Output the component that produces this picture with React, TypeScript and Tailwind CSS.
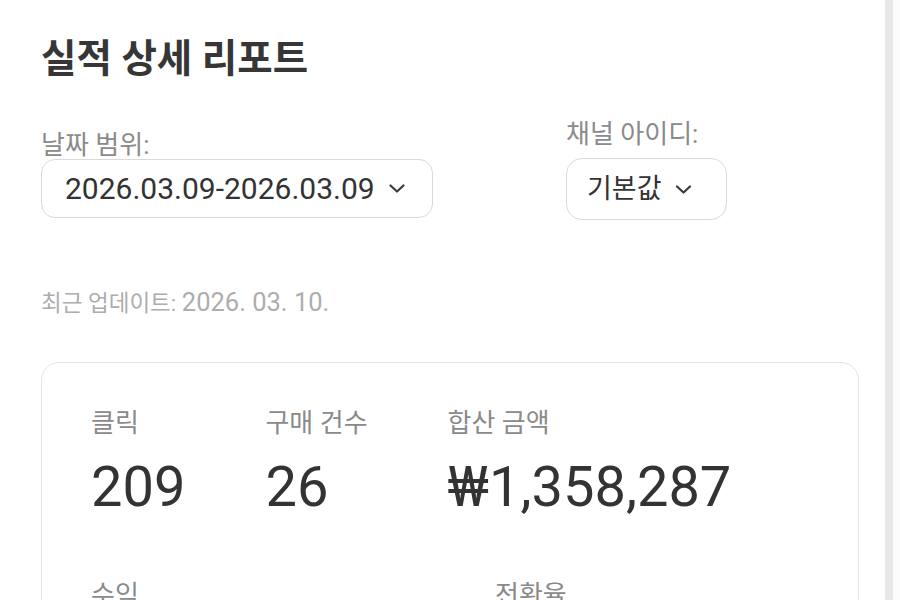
const font = "font-['Roboto','Noto_Sans_CJK_KR',sans-serif]"

function Chevron({ className }: { className?: string }) {
  return (
    <svg viewBox="0 0 16 9" className={className} fill="none" stroke="currentColor" strokeWidth={2.2} strokeLinecap="round" strokeLinejoin="round">
      <polyline points="1.5 1.5 8 7.5 14.5 1.5" />
    </svg>
  )
}

const stats = [
  { label: '클릭', value: '209' },
  { label: '구매 건수', value: '26' },
  { label: '합산 금액', value: '₩1,358,287' },
]

export default function App() {
  return (
    <div className={`flex h-screen w-full overflow-hidden bg-white text-[#333] ${font}`}>
      <main className="w-[885px] shrink-0 pl-[41px]">
        {/* Title */}
        <h1 className="pt-[37px] text-[38.5px] font-bold leading-[44px] text-[#363636]">
          실적 상세 리포트
        </h1>

        {/* Filters */}
        <div className="flex items-start gap-[133px]">
          <div className="mt-[50px] flex flex-col">
            <span className="text-[26px] leading-[28px] text-[#8a8a8a]">날짜 범위:</span>
            <button className="flex h-[59px] w-[392px] items-center gap-[14px] rounded-[14px] border-[1.5px] border-[#dadada] pl-[23px] text-[30px] text-[#333]">
              <span>2026.03.09-2026.03.09</span>
              <Chevron className="h-[9px] w-[16px] text-[#3a3a3a]" />
            </button>
          </div>
          <div className="mt-[39px] flex flex-col">
            <span className="text-[26px] leading-[28px] text-[#8a8a8a]">채널 아이디:</span>
            <button className="mt-[10px] flex h-[62px] w-[161px] items-center gap-[13px] rounded-[16px] border-[1.5px] border-[#dadada] pl-[20px] text-[27px] text-[#333]">
              <span>기본값</span>
              <Chevron className="h-[9px] w-[17px] text-[#3a3a3a]" />
            </button>
          </div>
        </div>

        {/* Last updated */}
        <p className="mt-[66px] text-[22.5px] leading-[32px] text-[#adadad]">
          최근 업데이트: <span className="text-[25.5px]">2026. 03. 10.</span>
        </p>

        {/* Summary card */}
        <section className="mt-[43px] w-[818px] rounded-[18px] border-[1.5px] border-[#e3e3e3] pb-10 pl-[49px] pt-[44px]">
          <div className="flex gap-[80px]">
            {stats.map((s) => (
              <div key={s.label} className="flex flex-col">
                <span className="text-[26px] leading-[32px] text-[#8a8a8a]">{s.label}</span>
                <span className="mt-[16px] text-[56px] leading-[64px] text-[#333]">{s.value}</span>
              </div>
            ))}
          </div>
          <div className="mt-[60px] flex gap-[80px]">
            <div className="flex w-[324px] flex-col">
              <span className="text-[26px] leading-[32px] text-[#8a8a8a]">수익</span>
              <span className="mt-[16px] text-[56px] leading-[64px] text-[#333]">₩271,657</span>
            </div>
            <div className="flex flex-col">
              <span className="text-[26px] leading-[32px] text-[#8a8a8a]">전환율</span>
              <span className="mt-[16px] text-[56px] leading-[64px] text-[#333]">12.44%</span>
            </div>
          </div>
        </section>
      </main>
      <div className="w-[8px] shrink-0 bg-[#e8e8e8]" />
      <div className="flex-1 bg-[#fcfcfc]" />
    </div>
  )
}
